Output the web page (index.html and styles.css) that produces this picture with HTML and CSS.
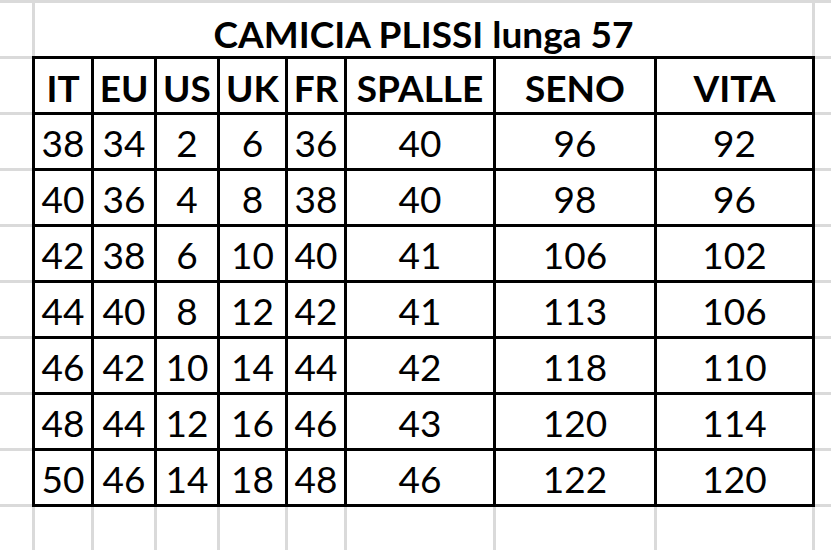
FILE: index.html
```html
<!DOCTYPE html>
<html lang="it">
<head>
<meta charset="utf-8">
<title>CAMICIA PLISSI lunga 57</title>
<link rel="stylesheet" href="styles.css">
</head>
<body>
<div class="sheet">
  <div class="cell col-a r1"></div>
  <div class="cell title">CAMICIA PLISSI lunga 57</div>
  <div class="cell col-j r1"></div>

  <div class="cell col-a r2"></div>
  <div class="cell col-a r3"></div>
  <div class="cell col-a r4"></div>
  <div class="cell col-a r5"></div>
  <div class="cell col-a r6"></div>
  <div class="cell col-a r7"></div>
  <div class="cell col-a r8"></div>
  <div class="cell col-a r9"></div>
  <div class="cell col-a r10"></div>

  <div class="cell col-j r2"></div>
  <div class="cell col-j r3"></div>
  <div class="cell col-j r4"></div>
  <div class="cell col-j r5"></div>
  <div class="cell col-j r6"></div>
  <div class="cell col-j r7"></div>
  <div class="cell col-j r8"></div>
  <div class="cell col-j r9"></div>
  <div class="cell col-j r10"></div>

  <div class="size-table">
    <div class="th">IT</div><div class="th">EU</div><div class="th">US</div><div class="th">UK</div><div class="th">FR</div><div class="th">SPALLE</div><div class="th">SENO</div><div class="th">VITA</div>
    <div class="td">38</div><div class="td">34</div><div class="td">2</div><div class="td">6</div><div class="td">36</div><div class="td">40</div><div class="td">96</div><div class="td">92</div>
    <div class="td">40</div><div class="td">36</div><div class="td">4</div><div class="td">8</div><div class="td">38</div><div class="td">40</div><div class="td">98</div><div class="td">96</div>
    <div class="td">42</div><div class="td">38</div><div class="td">6</div><div class="td">10</div><div class="td">40</div><div class="td">41</div><div class="td">106</div><div class="td">102</div>
    <div class="td">44</div><div class="td">40</div><div class="td">8</div><div class="td">12</div><div class="td">42</div><div class="td">41</div><div class="td">113</div><div class="td">106</div>
    <div class="td">46</div><div class="td">42</div><div class="td">10</div><div class="td">14</div><div class="td">44</div><div class="td">42</div><div class="td">118</div><div class="td">110</div>
    <div class="td">48</div><div class="td">44</div><div class="td">12</div><div class="td">16</div><div class="td">46</div><div class="td">43</div><div class="td">120</div><div class="td">114</div>
    <div class="td">50</div><div class="td">46</div><div class="td">14</div><div class="td">18</div><div class="td">48</div><div class="td">46</div><div class="td">122</div><div class="td">120</div>
  </div>

  <div class="cell bottom"></div>
  <div class="cell bottom"></div>
  <div class="cell bottom"></div>
  <div class="cell bottom"></div>
  <div class="cell bottom"></div>
  <div class="cell bottom"></div>
  <div class="cell bottom"></div>
  <div class="cell bottom"></div>
</div>
</body>
</html>
```
FILE: styles.css
```css
html, body {
  margin: 0;
  padding: 0;
  background: #ffffff;
}

body {
  width: 831px;
  height: 550px;
  overflow: hidden;
  font-family: "Lato", "Open Sans", sans-serif;
  color: #000000;
}

.sheet {
  display: grid;
  grid-template-columns: 32px 56px 60px 60px 65px 56px 146px 158px 155px 1fr;
  grid-template-rows: repeat(9, 53px) 1fr;
  gap: 3px;
  padding-top: 3px;
  height: 550px;
  box-sizing: border-box;
  background: #dadada;
}

.cell {
  background: #ffffff;
}

.col-a { grid-column: 1; }
.col-j { grid-column: 10; }
.r1 { grid-row: 1; }
.r2 { grid-row: 2; }
.r3 { grid-row: 3; }
.r4 { grid-row: 4; }
.r5 { grid-row: 5; }
.r6 { grid-row: 6; }
.r7 { grid-row: 7; }
.r8 { grid-row: 8; }
.r9 { grid-row: 9; }
.r10 { grid-row: 10; }

.bottom { grid-row: 10; }

.title {
  grid-column: 2 / 10;
  grid-row: 1;
  display: flex;
  align-items: flex-end;
  justify-content: center;
  font-weight: 700;
  font-size: 37px;
  line-height: 1;
  padding-bottom: 4px;
}

.size-table {
  grid-column: 2 / 10;
  grid-row: 2 / 10;
  margin: -3px;
  display: grid;
  grid-template-columns: 56px 60px 60px 65px 56px 146px 158px 155px;
  grid-template-rows: repeat(8, 53px);
  gap: 3px;
  padding: 3px;
  background: #000000;
}

.th, .td {
  background: #ffffff;
  display: flex;
  align-items: flex-end;
  justify-content: center;
  font-size: 37px;
  line-height: 1;
  white-space: nowrap;
}

.th {
  font-weight: 700;
  padding-bottom: 6px;
}

.td {
  font-weight: 400;
  padding-bottom: 7px;
}
```
